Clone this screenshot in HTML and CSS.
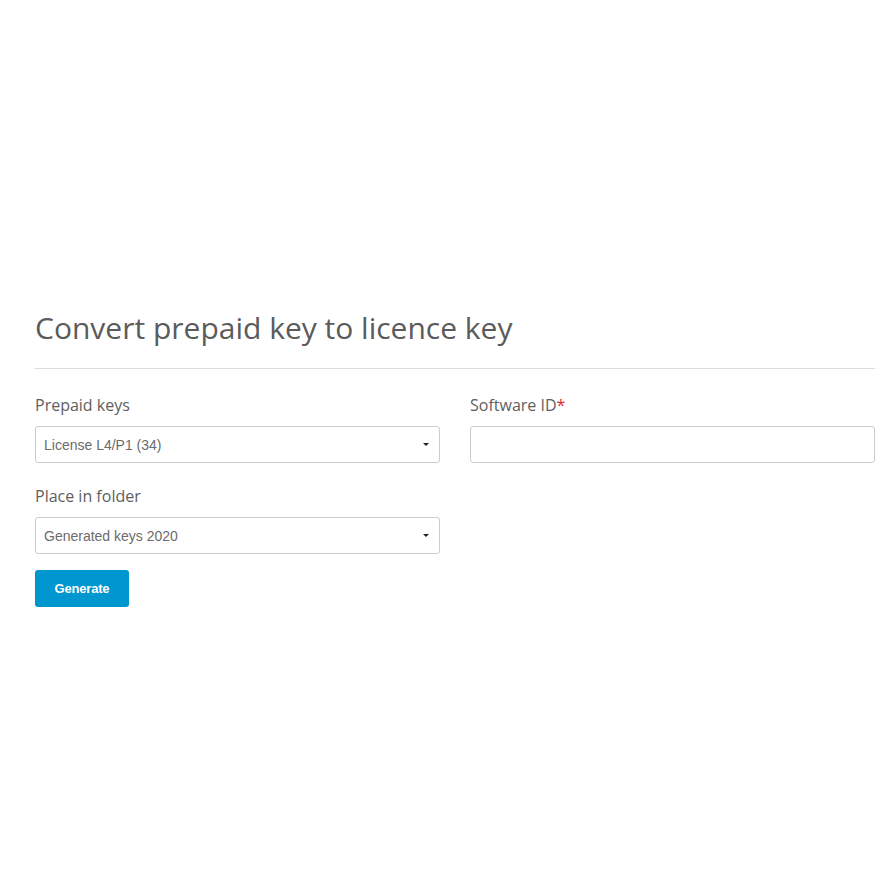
FILE: index.html
```html
<!DOCTYPE html>
<html lang="en">
<head>
<meta charset="utf-8">
<title>Convert prepaid key to licence key</title>
<link rel="stylesheet" href="styles.css">
</head>
<body>
<main class="page">
  <h1 class="title">Convert prepaid key to licence key</h1>
  <hr class="divider">
  <form class="form">
    <div class="col">
      <div class="field">
        <label class="label" for="keys">Prepaid keys</label>
        <div class="select-wrap">
          <select id="keys" class="select">
            <option>License L4/P1 (34)</option>
          </select>
        </div>
      </div>
      <div class="field field-second">
        <label class="label" for="folder">Place in folder</label>
        <div class="select-wrap">
          <select id="folder" class="select">
            <option>Generated keys 2020</option>
          </select>
        </div>
      </div>
      <button type="button" class="btn">Generate</button>
    </div>
    <div class="col">
      <div class="field">
        <label class="label" for="swid">Software ID<span class="req">*</span></label>
        <input id="swid" class="input" type="text">
      </div>
    </div>
  </form>
</main>
</body>
</html>
```

FILE: styles.css
```css
html, body {
  margin: 0;
  padding: 0;
  background: #fff;
}

.page {
  width: 840px;
  padding: 308px 0 0 35px;
  font-family: "Open Sans", "Liberation Sans", sans-serif;
}

.title {
  margin: 0;
  font-size: 30px;
  font-weight: 400;
  line-height: 40px;
  color: #5b5b5b;
}

.divider {
  margin: 20px 0 0 0;
  border: 0;
  border-top: 1px solid #dddddd;
  height: 0;
}

.form {
  display: grid;
  grid-template-columns: 405px 405px;
  column-gap: 30px;
  padding-top: 25px;
}

.col {
  display: flex;
  flex-direction: column;
  align-items: flex-start;
}

.field {
  display: flex;
  flex-direction: column;
  width: 100%;
}

.field-second {
  margin-top: 22px;
}

.label {
  font-size: 16px;
  line-height: 22px;
  color: #5e5e5e;
  margin-bottom: 10px;
}

.req {
  color: #e0262b;
}

.select-wrap {
  position: relative;
  width: 100%;
}

.select-wrap::after {
  content: "";
  position: absolute;
  right: 11px;
  top: 17px;
  border-left: 3px solid transparent;
  border-right: 3px solid transparent;
  border-top: 3px solid #222;
  pointer-events: none;
}

.select, .input {
  box-sizing: border-box;
  width: 100%;
  height: 37px;
  margin: 0;
  border: 1px solid #cccccc;
  border-radius: 3px;
  background: #fff;
  font-family: "Liberation Sans", Arial, sans-serif;
  font-size: 14px;
  color: #6b6b6b;
  outline: none;
}

.select {
  appearance: none;
  -webkit-appearance: none;
  padding: 0 24px 0 8px;
}

.input {
  padding: 0 8px;
}

.btn {
  margin-top: 16px;
  width: 94px;
  height: 37px;
  border: 0;
  border-radius: 3px;
  background: #0096cf;
  color: #fff;
  font-family: "Liberation Sans", Arial, sans-serif;
  font-size: 13px;
  font-weight: 700;
  letter-spacing: -0.2px;
  cursor: pointer;
}
```
